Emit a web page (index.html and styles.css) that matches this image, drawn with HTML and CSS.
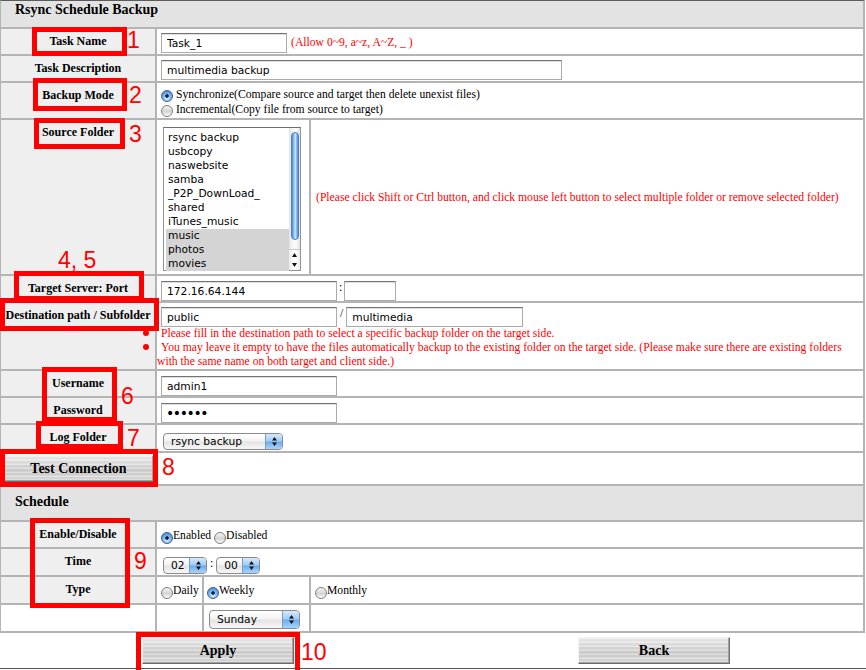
FILE: index.html
```html
<!DOCTYPE html>
<html>
<head>
<meta charset="utf-8">
<title>Rsync Schedule Backup</title>
<link rel="stylesheet" href="styles.css">
</head>
<body>
<div class="page">
  <div class="title">Rsync Schedule Backup</div>
  <table class="form">
    <colgroup><col class="c1"><col class="c2"><col class="c3"><col class="c4"></colgroup>
    <tr class="h25">
      <th>Task Name</th>
      <td colspan="3" class="val"><div class="line"><input class="field w126" value="Task_1"><span class="hint">(Allow 0~9, a~z, A~Z, _ )</span></div></td>
    </tr>
    <tr class="h25">
      <th>Task Description</th>
      <td colspan="3" class="val"><input class="field w401" value="multimedia backup"></td>
    </tr>
    <tr class="h35">
      <th>Backup Mode</th>
      <td colspan="3" class="val opts">
        <div class="opt"><span class="radio on"></span> Synchronize(Compare source and target then delete unexist files)</div>
        <div class="opt"><span class="radio"></span> Incremental(Copy file from source to target)</div>
      </td>
    </tr>
    <tr class="h154">
      <th>Source Folder</th>
      <td colspan="2" class="val listcell">
        <div class="listbox">
          <div class="items">
            <div class="item">rsync backup</div>
            <div class="item">usbcopy</div>
            <div class="item">naswebsite</div>
            <div class="item">samba</div>
            <div class="item">_P2P_DownLoad_</div>
            <div class="item">shared</div>
            <div class="item">iTunes_music</div>
            <div class="item sel">music</div>
            <div class="item sel">photos</div>
            <div class="item sel">movies</div>
          </div>
          <div class="scroll">
            <div class="thumb"></div>
            <div class="arrows">
              <span class="arr"><svg width="5" height="4" viewBox="0 0 5 4"><path d="M2.5 0 L5 4 H0Z" fill="#111"/></svg></span>
              <span class="arr"><svg width="5" height="4" viewBox="0 0 5 4"><path d="M0 0 H5 L2.5 4Z" fill="#111"/></svg></span>
            </div>
          </div>
        </div>
      </td>
      <td class="msg">(Please click Shift or Ctrl button, and click mouse left button to select multiple folder or remove selected folder)</td>
    </tr>
    <tr class="h25">
      <th>Target Server: Port</th>
      <td colspan="3" class="val pt5"><div class="line top"><input class="field w176" value="172.16.64.144"><span class="colon">:</span><input class="field w52" value=""></div></td>
    </tr>
    <tr class="h66">
      <th>Destination path / Subfolder</th>
      <td colspan="3" class="val">
        <div class="line top"><input class="field w176" value="public"><span class="slash">/</span><input class="field w177" value="multimedia"></div>
        <ul class="notes">
          <li>Please fill in the destination path to select a specific backup folder on the target side.</li>
          <li>You may leave it empty to have the files automatically backup to the existing folder on the target side. (Please make sure there are existing folders with the same name on both target and client side.)</li>
        </ul>
      </td>
    </tr>
    <tr class="h25">
      <th>Username</th>
      <td colspan="3" class="val pt5"><input class="field w176" value="admin1"></td>
    </tr>
    <tr class="h25">
      <th>Password</th>
      <td colspan="3" class="val pt5"><input class="field w176 pw" type="password" value="123456"></td>
    </tr>
    <tr class="h26">
      <th>Log Folder</th>
      <td colspan="3" class="val pt8 pl6">
        <span class="popup w120"><span class="ptext">rsync backup</span><span class="parrows"><svg width="5" height="11" viewBox="0 0 5 11"><path d="M2.5 1 L5 4.5 H0Z M0 6.5 H5 L2.5 10Z" fill="#111"/></svg></span></span>
      </td>
    </tr>
    <tr class="h31">
      <td colspan="4" class="btncell"><button class="btn btn-test">Test Connection</button></td>
    </tr>
    <tr class="h34">
      <td colspan="4" class="sect">Schedule</td>
    </tr>
    <tr class="h25">
      <th>Enable/Disable</th>
      <td colspan="3" class="val sched"><span class="radio on"></span>Enabled <span class="radio"></span>Disabled</td>
    </tr>
    <tr class="h26">
      <th>Time</th>
      <td colspan="3" class="val pt8 pl6">
        <div class="line">
          <span class="popup w44"><span class="ptext">02</span><span class="parrows"><svg width="5" height="11" viewBox="0 0 5 11"><path d="M2.5 1 L5 4.5 H0Z M0 6.5 H5 L2.5 10Z" fill="#111"/></svg></span></span>
          <span class="tcolon">:</span>
          <span class="popup w44"><span class="ptext">00</span><span class="parrows"><svg width="5" height="11" viewBox="0 0 5 11"><path d="M2.5 1 L5 4.5 H0Z M0 6.5 H5 L2.5 10Z" fill="#111"/></svg></span></span>
        </div>
      </td>
    </tr>
    <tr class="h26">
      <th>Type</th>
      <td class="val sched pl4"><span class="radio"></span>Daily</td>
      <td class="val sched pl3"><span class="radio on"></span>Weekly</td>
      <td class="val sched pl4"><span class="radio"></span>Monthly</td>
    </tr>
    <tr class="h26">
      <td class="blank"></td>
      <td></td>
      <td class="val pt5 pl5">
        <span class="popup w91 tall"><span class="ptext">Sunday</span><span class="parrows"><svg width="5" height="11" viewBox="0 0 5 11"><path d="M2.5 1 L5 4.5 H0Z M0 6.5 H5 L2.5 10Z" fill="#111"/></svg></span></span>
      </td>
      <td></td>
    </tr>
  </table>
  <div class="actions">
    <button class="btn btn-apply">Apply</button>
    <button class="btn btn-back">Back</button>
  </div>

  <div class="mark m1"></div><span class="num n1">1</span>
  <div class="mark m2"></div><span class="num n2">2</span>
  <div class="mark m3"></div><span class="num n3">3</span>
  <span class="num n45">4, 5</span>
  <div class="mark m4"></div>
  <div class="mark m5"></div>
  <div class="mark m6"></div><span class="num n6">6</span>
  <div class="mark m7"></div><span class="num n7">7</span>
  <div class="mark m8"></div><span class="num n8">8</span>
  <div class="mark m9"></div><span class="num n9">9</span>
  <div class="mark m10"></div><span class="num n10">10</span>
</div>
</body>
</html>
```

FILE: styles.css
```css
html, body {
  margin: 0;
  padding: 0;
  background: #fff;
  overflow: hidden;
}
body {
  font-family: "Liberation Serif", "Times New Roman", serif;
  font-size: 11.65px;
  color: #000;
}
.page {
  position: relative;
  width: 866px;
  height: 670px;
}
.title {
  box-sizing: border-box;
  width: 865px;
  height: 27px;
  border-top: 1px solid #5b5b5b;
  border-left: 1px solid #b4b4b4;
  border-right: 2px solid #b4b4b4;
  background: #e3e3e3;
  padding: 1px 0 0 14px;
  font-weight: bold;
  font-size: 14px;
  line-height: 16px;
}
.form {
  margin-left: -1px;
  border-collapse: separate;
  border-spacing: 2px;
  background: #b4b4b4;
  table-layout: fixed;
  width: 866px;
}
.c1 { width: 154px; }
.c2 { width: 45px; }
.c3 { width: 105px; }
.c4 { width: 552px; }
.h25 { height: 25px; }
.h26 { height: 26px; }
.h31 { height: 31px; }
.h34 { height: 34px; }
.h35 { height: 35px; }
.h66 { height: 66px; }
.h154 { height: 154px; }

.form th, .form td {
  padding: 0;
  vertical-align: top;
  background: #fff;
}
.form th {
  background: #efefef;
  font-weight: bold;
  font-size: 12px;
  line-height: 14px;
  padding-top: 5px;
  text-align: center;
  white-space: nowrap;
}
.form td.blank { background: #fff; }
.form td.val {
  padding: 4px 4px 0 4px;
}
.form td.pt5 { padding-top: 5px; }
.form td.pt8 { padding-top: 8px; }
.form td.pl6 { padding-left: 6px; }
.form td.pl5 { padding-left: 5px; }
.form td.pl4 { padding-left: 4px; }
.form td.pl3 { padding-left: 3px; }

.line {
  display: flex;
  align-items: center;
}
.line.top { align-items: flex-start; }
.hint {
  color: #f00;
  margin-left: 4px;
  line-height: 14px;
}
.field {
  box-sizing: border-box;
  height: 20px;
  margin: 0;
  border: 1px solid #ababab;
  border-top-color: #747474;
  box-shadow: inset 0 1px 0 #dedede;
  padding: 0 5px;
  font-family: "DejaVu Sans", sans-serif;
  font-size: 10.7px;
  color: #000;
  background: #fff;
  outline: none;
  border-radius: 0;
}
.field.pw {
  font-size: 14px;
  letter-spacing: -1.4px;
  padding-left: 4px;
}
.w52 { width: 52px; }
.w126 { width: 126px; }
.w176 { width: 176px; }
.w177 { width: 177px; }
.w401 { width: 401px; }
.colon {
  margin: 0 2px;
  line-height: 14px;
}
.slash {
  margin: 0 3px;
  line-height: 14px;
}

.opts .opt {
  height: 15px;
  line-height: 15px;
  white-space: nowrap;
}
.radio {
  display: inline-block;
  box-sizing: border-box;
  width: 12px;
  height: 12px;
  border-radius: 50%;
  border: 1px solid #7f7f7f;
  background: linear-gradient(#f4f4f4, #d4d4d4 55%, #fdfdfd);
  vertical-align: -4px;
}
.radio.on {
  border-color: #3d5f8c;
  background:
    radial-gradient(circle, #141d30 0 1.4px, transparent 2.1px),
    radial-gradient(circle at 50% 75%, #d6eeff 0, #7db6f2 45%, #3a7ccf 100%);
}
.sched {
  line-height: 15px;
  white-space: nowrap;
}
.form td.sched { padding-top: 6px; }
.sched .radio { vertical-align: -5px; }

.listcell {
  padding: 7px 0 0 6px !important;
}
.listbox {
  display: flex;
  box-sizing: border-box;
  width: 138px;
  height: 144px;
  border: 1px solid #939393;
  border-top-color: #6f6f6f;
  background: #fff;
}
.items {
  flex: 1;
  padding: 3px 0 0 2px;
}
.item {
  height: 14px;
  line-height: 14px;
  padding-left: 2px;
  font-family: "DejaVu Sans", sans-serif;
  font-size: 10.7px;
  white-space: nowrap;
}
.item.sel { background: #d4d4d4; }
.scroll {
  width: 11px;
  display: flex;
  flex-direction: column;
  background: linear-gradient(90deg, #e2e2e2, #fbfbfb 35%, #fbfbfb 65%, #e2e2e2);
}
.thumb {
  margin: 4px 1px 0 2px;
  height: 108px;
  border-radius: 4px;
  box-sizing: border-box;
  border: 1px solid #4f7fc0;
  background: linear-gradient(90deg, #4c8ad8, #95c6f6 35%, #d2e9ff 55%, #8bbff3 75%, #4c8ad8);
}
.arrows {
  margin-top: auto;
  height: 20px;
  display: flex;
  flex-direction: column;
  border-top: 1px solid #c9c9c9;
  background: linear-gradient(90deg, #ececec, #fff 50%, #ececec);
}
.arr {
  flex: 1;
  display: flex;
  align-items: center;
  justify-content: center;
}
.msg {
  vertical-align: middle !important;
  padding-left: 5px !important;
  color: #f00;
  white-space: nowrap;
}

.notes {
  margin: 0 0 0 -4px;
  padding: 0;
  list-style: none;
  color: #f00;
  line-height: 14px;
}
.notes li {
  text-indent: 4px;
}
.notes li::before {
  content: "";
  display: inline-block;
  width: 6px;
  height: 6px;
  border-radius: 50%;
  background: #f00;
  margin-left: -18px;
  margin-right: 12px;
  vertical-align: 1px;
}

.popup {
  display: inline-flex;
  align-items: center;
  box-sizing: border-box;
  height: 17px;
  border: 1px solid #8a8a8a;
  border-radius: 4px;
  overflow: hidden;
  background: linear-gradient(#ffffff, #f3f3f3 45%, #e4e4e4 55%, #f7f7f7);
  font-family: "DejaVu Sans", sans-serif;
  font-size: 10.7px;
  vertical-align: top;
}
.popup.tall { height: 19px; }
.w44 { width: 44px; }
.w91 { width: 91px; }
.w120 { width: 120px; }
.ptext {
  flex: 1;
  padding-left: 7px;
  white-space: nowrap;
}
.parrows {
  width: 16px;
  align-self: stretch;
  display: flex;
  align-items: center;
  justify-content: center;
  border-left: 1px solid #7d9cc4;
  background: linear-gradient(#d5e9fd, #a3cdf5 45%, #6fadee 55%, #a9d4fb);
}
.tcolon {
  margin: 0 3px;
  line-height: 14px;
  align-self: flex-start;
}

.btncell {
  padding: 2px 0 0 2px !important;
}
.btn {
  display: block;
  box-sizing: border-box;
  width: 152px;
  height: 27px;
  padding: 0;
  border: 1px solid;
  border-color: #f3f3f3 #707070 #6a6a6a #f3f3f3;
  box-shadow: inset -1px -1px 0 #a2a2a2;
  background:
    repeating-linear-gradient(180deg, rgba(255,255,255,0.35) 0 1px, rgba(0,0,0,0.025) 1px 3px, rgba(255,255,255,0.1) 3px 4px),
    linear-gradient(#ebebeb, #d8d8d8 40%, #cdcdcd 60%, #dcdcdc);
  font-family: "Liberation Serif", "Times New Roman", serif;
  font-weight: bold;
  font-size: 14px;
  color: #000;
}
.btn-test { width: 151px; }
.sect {
  background: #e3e3e3 !important;
  padding: 8px 0 0 14px !important;
  font-weight: bold;
  font-size: 14px;
  line-height: 16px;
}

.actions {
  display: flex;
  align-items: flex-start;
  box-sizing: border-box;
  height: 36px;
  padding-top: 4px;
  border-bottom: 1px solid #555;
}
.btn-apply { margin-left: 142px; }
.btn-back { margin-left: 284px; }

.mark {
  position: absolute;
  box-sizing: border-box;
  border: 5px solid #f00;
}
.m1 { left: 32px; top: 27px; width: 95px; height: 29px; }
.m2 { left: 33px; top: 78px; width: 94px; height: 33px; }
.m3 { left: 34px; top: 118px; width: 91px; height: 31px; }
.m4 { left: 14px; top: 271px; width: 130px; height: 30px; }
.m5 { left: 0; top: 298px; width: 159px; height: 33px; }
.m6 { left: 42px; top: 367px; width: 75px; height: 55px; }
.m7 { left: 36px; top: 421px; width: 87px; height: 28px; }
.m8 { left: 0; top: 449px; width: 158px; height: 38px; }
.m9 { left: 30px; top: 518px; width: 100px; height: 90px; }
.m10 { left: 136px; top: 632px; width: 164px; height: 38px; border-bottom: none; }

.num {
  position: absolute;
  font-family: "Liberation Sans", Arial, sans-serif;
  font-size: 23px;
  line-height: 23px;
  color: #f00;
  white-space: nowrap;
}
.n1 { left: 127px; top: 29px; }
.n2 { left: 129px; top: 84px; }
.n3 { left: 129px; top: 123px; }
.n45 { left: 58px; top: 249px; }
.n6 { left: 121px; top: 385px; }
.n7 { left: 127px; top: 427px; }
.n8 { left: 162px; top: 456px; }
.n9 { left: 134px; top: 550px; }
.n10 { left: 301px; top: 641px; }
```
